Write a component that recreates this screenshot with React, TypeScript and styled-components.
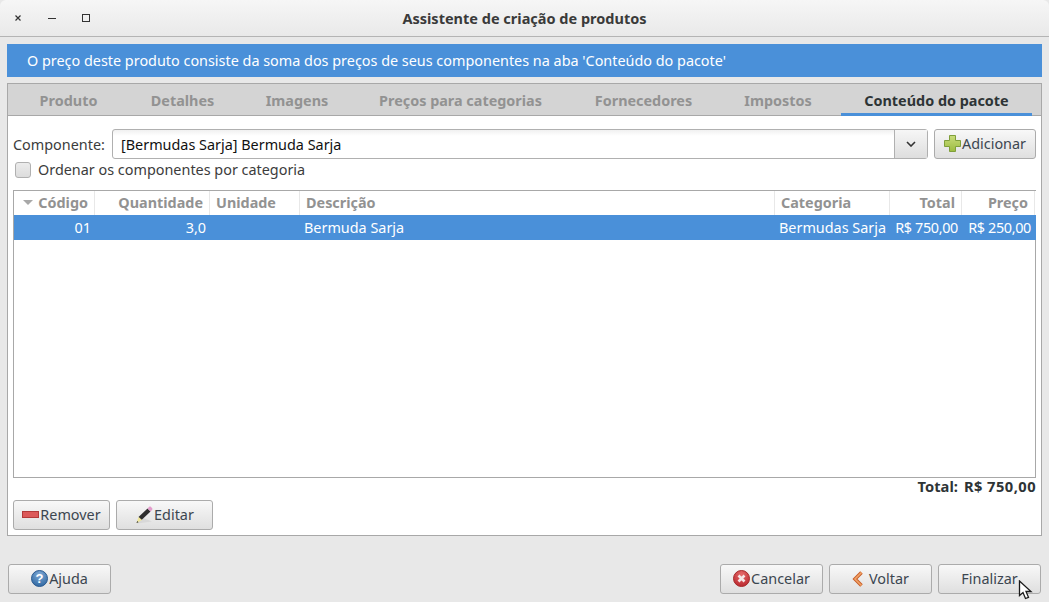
import React from 'react';
import styled, {createGlobalStyle} from 'styled-components';

const Global = createGlobalStyle`
  html, body {
    margin: 0;
    height: 100%;
    background: #e8e8e8;
  }
  body {
    font-family: "Noto Sans", "Open Sans", sans-serif;
    font-size: 14.4px;
    color: #3c3c3c;
  }
`

const Page = styled.div`
  width: 1049px;
  height: 602px;
  position: relative;
  overflow: hidden;
  display: flex;
  flex-direction: column;
`

const TitleBar = styled.div`
  height: 36px;
  border-bottom: 1px solid #b4b4b4;
  border-radius: 6px 6px 0 0;
  background: linear-gradient(#f6f6f6, #e9e9e9);
  display: grid;
  grid-template-columns: 120px 1fr 120px;
  align-items: center;
`

const WindowControls = styled.div`
  display: flex;
  padding-left: 12px;
  gap: 22px;
  color: #333;
`

const WindowControl = styled.svg`
  width: 12px;
  height: 12px;
  display: block;
`

const Title = styled.div`
  text-align: center;
  font-weight: 700;
  font-size: 14.5px;
  color: #3a3a3a;
`

const Body = styled.div`
  flex: 1;
  padding: 7px 7px 8px 7px;
  display: flex;
  flex-direction: column;
`

const Banner = styled.div`
  height: 33px;
  background: #4a90d9;
  color: #fff;
  padding-left: 20px;
  display: flex;
  align-items: center;
  margin-bottom: 6px;
`

const Notebook = styled.div`
  height: 453px;
  box-sizing: border-box;
  border: 1px solid #a8a8a8;
  background: #fff;
  display: flex;
  flex-direction: column;
`

const TabBar = styled.div`
  height: 31px;
  flex: none;
  background: #d4d4d4;
  border-bottom: 1px solid #a8a8a8;
  display: flex;
  padding-left: 5px;
`

const Tab = styled.div<{$active?: boolean; $width: number}>`
  width: ${p => p.$width}px;
  box-sizing: border-box;
  margin: 0 4px -1px;
  display: flex;
  align-items: center;
  justify-content: center;
  font-weight: 700;
  font-size: 14.4px;
  white-space: nowrap;
  color: ${p => p.$active ? '#2e3436' : '#929292'};
  border-bottom: 3px solid ${p => p.$active ? '#4a90d9' : 'transparent'};
  border-top: 3px solid transparent;
`

const TabPanel = styled.div`
  flex: 1;
  padding: 13px 5px 5px 5px;
  display: flex;
  flex-direction: column;
`

const PickerRow = styled.div`
  display: flex;
  align-items: center;
  height: 30px;
`

const PickerLabel = styled.span`
  width: 99px;
  flex: none;
`

const Combo = styled.div`
  flex: 1;
  height: 30px;
  box-sizing: border-box;
  border: 1px solid #b0b0b0;
  border-radius: 3px;
  display: flex;
  background: linear-gradient(#f0f0f0, #fff 6px);
  margin-right: 6px;
`

const ComboText = styled.div`
  flex: 1;
  padding-left: 8px;
  display: flex;
  align-items: center;
  color: #111;
`

const ComboArrow = styled.div`
  width: 32px;
  border-left: 1px solid #b0b0b0;
  background: linear-gradient(#f6f6f6, #dedede);
  display: flex;
  align-items: center;
  justify-content: center;
`

const Button = styled.div<{$width: number; $gap?: number}>`
  width: ${p => p.$width}px;
  height: 30px;
  flex: none;
  box-sizing: border-box;
  border: 1px solid #ababab;
  border-radius: 3px;
  background: linear-gradient(#f8f8f8, #dfdfdf);
  display: flex;
  align-items: center;
  justify-content: center;
  gap: ${p => p.$gap ?? 1}px;
  padding-bottom: 1px;
  color: #3c4650;
`

const CheckRow = styled.label`
  display: flex;
  align-items: center;
  gap: 7px;
  height: 21px;
  padding-left: 2px;
  margin-bottom: 10px;
`

const CheckBox = styled.span`
  width: 14px;
  height: 14px;
  border: 1px solid #b0b0b0;
  border-radius: 3px;
  background: linear-gradient(#ececec, #dcdcdc);
`

const Table = styled.div`
  height: 288px;
  box-sizing: border-box;
  border: 1px solid #a8a8a8;
  background: #fff;
`

const Row = styled.div<{$header?: boolean}>`
  display: grid;
  grid-template-columns: 81px 115px 90px 475px 115px 72px 73px;
  height: ${p => p.$header ? 24 : 25}px;
  box-sizing: border-box;
  background: ${p => p.$header ? '#fff' : '#4a90d9'};
  color: ${p => p.$header ? '#929292' : '#fff'};
  font-weight: ${p => p.$header ? 700 : 400};
  margin-right: -1px;
`

const Cell = styled.div<{$right?: boolean; $header?: boolean; $tight?: boolean}>`
  display: flex;
  align-items: center;
  justify-content: ${p => p.$right ? 'flex-end' : 'flex-start'};
  gap: 5px;
  white-space: nowrap;
  padding: 0 ${p => p.$header ? 6 : 4}px ${p => p.$header ? 1 : 0}px;
  border-right: ${p => p.$header ? '1px solid #e8e8e8' : 'none'};
  letter-spacing: ${p => p.$tight ? -0.35 : 0}px;
`

const SortArrow = styled.span`
  width: 0;
  height: 0;
  border-left: 5px solid transparent;
  border-right: 5px solid transparent;
  border-top: 5px solid #a8a8a8;
  margin-right: auto;
  margin-left: 3px;
`

const TotalLine = styled.div`
  height: 16px;
  display: flex;
  align-items: center;
  justify-content: flex-end;
  gap: 6px;
  font-weight: 700;
  font-size: 14.7px;
  color: #2e3436;
`

const TotalValue = styled.span`
  letter-spacing: 0.45px;
`

const ActionRow = styled.div`
  display: flex;
  gap: 6px;
  margin-top: 6px;
`

const Footer = styled.div`
  margin-top: auto;
  display: flex;
  gap: 6px;
  padding: 0 1px;
`

const FooterSpacer = styled.div`
  flex: 1;
`

const Pointer = styled.svg`
  position: absolute;
  left: 1018px;
  top: 580px;
  width: 16px;
  height: 20px;
`

const columns = [
    {title: 'Código', right: true, value: '01'},
    {title: 'Quantidade', right: true, value: '3,0'},
    {title: 'Unidade', value: ''},
    {title: 'Descrição', value: 'Bermuda Sarja'},
    {title: 'Categoria', value: 'Bermudas Sarja'},
    {title: 'Total', right: true, tight: true, value: 'R$ 750,00'},
    {title: 'Preço', right: true, tight: true, value: 'R$ 250,00'},
]

const tabs = [
    {title: 'Produto', width: 103},
    {title: 'Detalhes', width: 109},
    {title: 'Imagens', width: 104},
    {title: 'Preços para categorias', width: 207},
    {title: 'Fornecedores', width: 143},
    {title: 'Impostos', width: 110},
    {title: 'Conteúdo do pacote', width: 191, active: true},
]

const PlusIcon = () => (
    <svg width="17" height="17" viewBox="0 0 17 17">
        <defs>
            <linearGradient id="plusFill" x1="0" y1="0" x2="0" y2="1">
                <stop offset="0" stopColor="#c9dc7c"/>
                <stop offset="1" stopColor="#9cbc3f"/>
            </linearGradient>
        </defs>
        <path d="M5.500 0.500h6v5h5v6h-5v5h-6v-5h-5v-6h5z" fill="url(#plusFill)" stroke="#7f9f3a"/>
    </svg>
)

const MinusIcon = () => (
    <svg width="17" height="8" viewBox="0 0 17 8">
        <rect x="0.500" y="0.500" width="16" height="6" fill="#dc5a5a" stroke="#b33a3a"/>
    </svg>
)

const PencilIcon = () => (
    <svg width="18" height="18" viewBox="0 0 18 18">
        <path d="M2 17.500l15-2-10-4z" fill="#cfcfcf" opacity="0.6"/>
        <path d="M3.500 11L12.500 2.500l3 3-9 8.500z" fill="#2e2e2e"/>
        <path d="M12.500 2.500l1.500-1.500c.8-.6 1.500-.5 2 0l1 1c.5.6.5 1.300 0 2l-1.500 1.500z" fill="#e39ccb"/>
        <path d="M3.500 11l-2 6 5.500-3z" fill="#efe59a"/>
        <path d="M2.200 15l-.7 2 2-.7z" fill="#333"/>
    </svg>
)

const HelpIcon = () => (
    <svg width="17" height="17" viewBox="0 0 17 17">
        <defs>
            <radialGradient id="helpFill" cx="0.500" cy="0.250" r="0.800">
                <stop offset="0" stopColor="#7fa9d6"/>
                <stop offset="1" stopColor="#2c659f"/>
            </radialGradient>
        </defs>
        <circle cx="8.500" cy="8.500" r="8" fill="url(#helpFill)" stroke="#2a5a90"/>
        <text x="8.500" y="13" textAnchor="middle" fontSize="13" fontWeight="700" fill="#fff" fontFamily="Liberation Sans">?</text>
    </svg>
)

const CancelIcon = () => (
    <svg width="17" height="17" viewBox="0 0 17 17">
        <defs>
            <radialGradient id="cancelFill" cx="0.500" cy="0.250" r="0.800">
                <stop offset="0" stopColor="#e56a6a"/>
                <stop offset="1" stopColor="#b8252c"/>
            </radialGradient>
        </defs>
        <circle cx="8.500" cy="8.500" r="8" fill="url(#cancelFill)" stroke="#a52a2a"/>
        <path d="M5.500 5.500l6 6M11.500 5.500l-6 6" stroke="#f4e6e6" strokeWidth="2.600"/>
    </svg>
)

const BackIcon = () => (
    <svg width="12" height="16" viewBox="0 0 12 16">
        <path d="M9.500 1.500L3 8l6.500 6.500" fill="none" stroke="#c8602c" strokeWidth="3.600"/>
        <path d="M9.500 1.500L3 8l6.500 6.500" fill="none" stroke="#f2a468" strokeWidth="1.600"/>
    </svg>
)

export default function App() {
    return (
        <Page>
            <Global/>
            <TitleBar>
                <WindowControls>
                    <WindowControl viewBox="0 0 12 12">
                        <path d="M3.500 3.500l5 5M8.500 3.500l-5 5" stroke="currentColor" strokeWidth="1.200"/>
                    </WindowControl>
                    <WindowControl viewBox="0 0 12 12">
                        <path d="M2 6.500h8" stroke="currentColor"/>
                    </WindowControl>
                    <WindowControl viewBox="0 0 12 12">
                        <rect x="2.500" y="2.500" width="7" height="7" fill="none" stroke="currentColor"/>
                    </WindowControl>
                </WindowControls>
                <Title>Assistente de criação de produtos</Title>
            </TitleBar>
            <Body>
                <Banner>O preço deste produto consiste da soma dos preços de seus componentes na aba 'Conteúdo do pacote'</Banner>
                <Notebook>
                    <TabBar>
                        {tabs.map(tab => (
                            <Tab key={tab.title} $active={tab.active} $width={tab.width}>{tab.title}</Tab>
                        ))}
                    </TabBar>
                    <TabPanel>
                        <PickerRow>
                            <PickerLabel>Componente:</PickerLabel>
                            <Combo>
                                <ComboText>[Bermudas Sarja] Bermuda Sarja</ComboText>
                                <ComboArrow>
                                    <svg width="10" height="6" viewBox="0 0 10 6">
                                        <path d="M1 1l4 4 4-4" fill="none" stroke="#333" strokeWidth="1.600"/>
                                    </svg>
                                </ComboArrow>
                            </Combo>
                            <Button $width={102}><PlusIcon/>Adicionar</Button>
                        </PickerRow>
                        <CheckRow><CheckBox/>Ordenar os componentes por categoria</CheckRow>
                        <Table>
                            <Row $header>
                                {columns.map((col, i) => (
                                    <Cell key={col.title} $header $right={col.right}>
                                        {i === 0 && <SortArrow/>}
                                        {col.title}
                                    </Cell>
                                ))}
                            </Row>
                            <Row>
                                {columns.map(col => (
                                    <Cell key={col.title} $right={col.right} $tight={col.tight}>{col.value}</Cell>
                                ))}
                            </Row>
                        </Table>
                        <TotalLine><span>Total:</span><TotalValue>R$ 750,00</TotalValue></TotalLine>
                        <ActionRow>
                            <Button $width={97}><MinusIcon/>Remover</Button>
                            <Button $width={97}><PencilIcon/>Editar</Button>
                        </ActionRow>
                    </TabPanel>
                </Notebook>
                <Footer>
                    <Button $width={103}><HelpIcon/>Ajuda</Button>
                    <FooterSpacer/>
                    <Button $width={103}><CancelIcon/>Cancelar</Button>
                    <Button $width={103} $gap={5}><BackIcon/>Voltar</Button>
                    <Button $width={103}>Finalizar</Button>
                </Footer>
            </Body>
            <Pointer viewBox="0 0 16 20">
                <path d="M1.500 1v14.500l3.500-3 2.500 6 3-1.200-2.500-5.800h5z" fill="#fff" stroke="#1a1a1a" strokeWidth="1.300"/>
            </Pointer>
        </Page>
    )
}
